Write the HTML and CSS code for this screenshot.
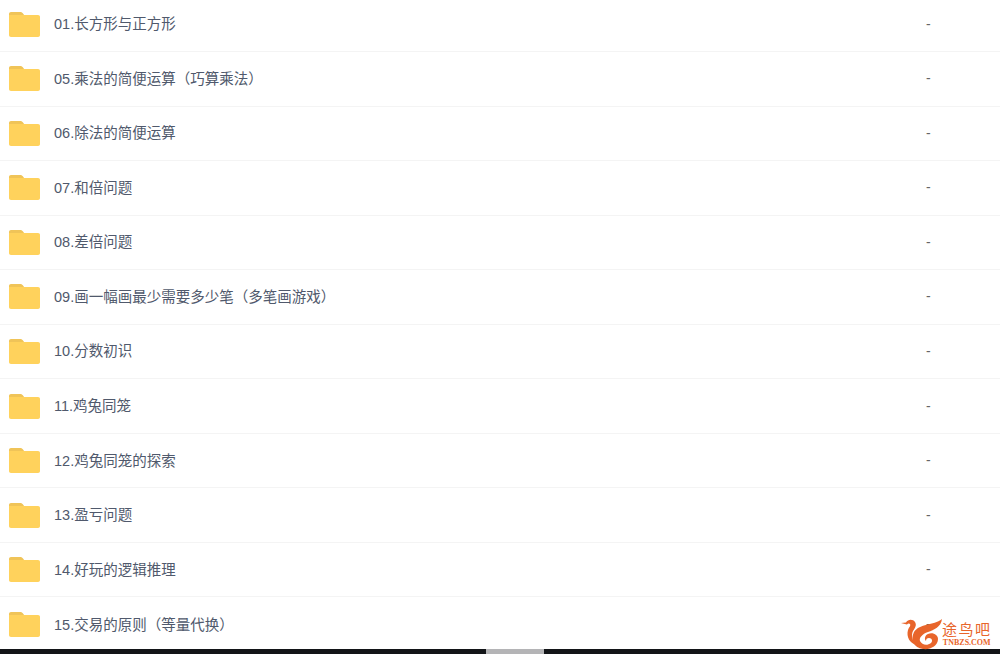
FILE: index.html
```html
<!doctype html>
<html>
<head>
<meta charset="utf-8">
<title>文件列表</title>
<link rel="stylesheet" href="styles.css">
</head>

<body>

<svg class="defs" width="0" height="0">
 <symbol id="folder" viewBox="0 0 31 25">
  <path fill="#f0c458" d="M0 2C0 .8.8 0 2 0h9c1.200 0 2 .4 2.800 1.200L15.500 3.500H0z"/>
  <path fill="#ffd25c" d="M0 3h29c1.200 0 2 .8 2 2v18c0 1.200-.8 2-2 2H2c-1.200 0-2-.8-2-2z"/>
 </symbol>
</svg>

<div class="list">
 <div class="row"><svg class="icon"><use href="#folder"/></svg><span class="name">01.长方形与正方形</span><span class="size">-</span></div>
 <div class="row"><svg class="icon"><use href="#folder"/></svg><span class="name">05.乘法的简便运算（巧算乘法）</span><span class="size">-</span></div>
 <div class="row"><svg class="icon"><use href="#folder"/></svg><span class="name">06.除法的简便运算</span><span class="size">-</span></div>
 <div class="row"><svg class="icon"><use href="#folder"/></svg><span class="name">07.和倍问题</span><span class="size">-</span></div>
 <div class="row"><svg class="icon"><use href="#folder"/></svg><span class="name">08.差倍问题</span><span class="size">-</span></div>
 <div class="row"><svg class="icon"><use href="#folder"/></svg><span class="name">09.画一幅画最少需要多少笔（多笔画游戏）</span><span class="size">-</span></div>
 <div class="row"><svg class="icon"><use href="#folder"/></svg><span class="name">10.分数初识</span><span class="size">-</span></div>
 <div class="row"><svg class="icon"><use href="#folder"/></svg><span class="name">11.鸡兔同笼</span><span class="size">-</span></div>
 <div class="row"><svg class="icon"><use href="#folder"/></svg><span class="name">12.鸡兔同笼的探索</span><span class="size">-</span></div>
 <div class="row"><svg class="icon"><use href="#folder"/></svg><span class="name">13.盈亏问题</span><span class="size">-</span></div>
 <div class="row"><svg class="icon"><use href="#folder"/></svg><span class="name">14.好玩的逻辑推理</span><span class="size">-</span></div>
 <div class="row"><svg class="icon"><use href="#folder"/></svg><span class="name">15.交易的原则（等量代换）</span><span class="size">-</span></div>
</div>

<div class="strip"><div class="thumb"></div></div>

<div class="logo">
 <svg class="bird" viewBox="0 0 42 32">
  <path fill="#e8652b" d="M0 5 5 4.500C7 1 12 1 14 4c2 3 0 6-2 9-2 4-1 9 3 14-6-2-10-8-8-15 1-3 3-4 2-6-1-1-2-.5-3 .5z"/>
  <path fill="#e8652b" d="M41 1c-1 8-8 11-14 13-6 2-9 6-8 9 2 4 7 5 11 2 2-2 1-5-2-5-2 0-3 1-3 3-2-2-1-6 2-7 5-2 10 1 10 5 0 7-8 11-15 10-9-1-13-9-9-17C19 5 32 8 41 1z"/>
 </svg>
 <div class="brand">
  <div class="brand-cn">途鸟吧</div>
  <div class="brand-en">TNBZS.COM</div>
 </div>
</div>

</body>
</html>
```

FILE: styles.css
```css
html, body {
	margin: 0;
	height: 654px;
	overflow: hidden;
	background: #fff;
}

body {
	position: relative;
	font-family: "Liberation Sans", "Noto Sans CJK SC", sans-serif;
}

.defs { display: block; }

.list { margin-top: -2.6px; }

.row {
	display: flex;
	align-items: center;
	box-sizing: border-box;
	height: 54.55px;
	padding-left: 9px;
	border-bottom: 1px solid #f4f4f4;
}

.row:last-child { border-bottom: 0; }

.icon {
	width: 31px;
	height: 25px;
	flex: none;
}

.name {
	margin-left: 14px;
	margin-bottom: 3px;
	flex: 1;
	font-size: 14.5px;
	color: #50596c;
}

.size {
	width: 74px;
	flex: none;
	margin-bottom: 1px;
	font-size: 14px;
	color: #666;
}

.strip {
	position: absolute;
	left: 0;
	right: 0;
	bottom: 0;
	height: 5px;
	background: #131518;
}

.thumb {
	position: absolute;
	left: 486px;
	top: 0;
	width: 58px;
	height: 5px;
	background: #b4b4b6;
}

.logo {
	position: absolute;
	left: 901px;
	top: 618px;
	display: flex;
}

.bird {
	width: 42px;
	height: 32px;
	flex: none;
}

.brand {
	margin-left: -1px;
	padding-top: 4px;
	color: #e8652b;
	text-align: center;
}

.brand-cn {
	font-size: 15px;
	line-height: 16px;
	letter-spacing: 1.500px;
}

.brand-en {
	font-family: "Liberation Serif", serif;
	font-size: 8px;
	line-height: 9px;
	font-weight: bold;
}
```
